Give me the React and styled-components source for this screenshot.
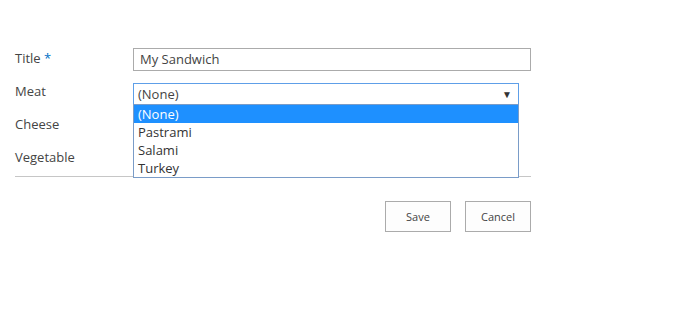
import styled, { createGlobalStyle } from "styled-components";

const GlobalStyle = createGlobalStyle`
  body {
    margin: 0;
    background: #ffffff;
    font-family: "Open Sans", "Noto Sans", sans-serif;
    color: #444444;
  }
`;

const options = ["(None)", "Pastrami", "Salami", "Turkey"];

export default function App() {
  return (
    <Page>
      <GlobalStyle />
      <Form>
        <Label>
          Title <Required>*</Required>
        </Label>
        <TextInput>My Sandwich</TextInput>

        <Label>Meat</Label>
        <SelectWrap>
          <Select>
            <span>(None)</span>
            <Arrow>▼</Arrow>
          </Select>
          <Menu>
            {options.map((o, i) => (
              <Option key={o} selected={i === 0}>
                {o}
              </Option>
            ))}
          </Menu>
        </SelectWrap>

        <Label>Cheese</Label>
        <div />

        <Label>Vegetable</Label>
        <div />
      </Form>
      <Divider />
      <Actions>
        <Button>Save</Button>
        <Button>Cancel</Button>
      </Actions>
    </Page>
  );
}

const Page = styled.div`
  width: 516px;
  padding: 48px 0 0 15px;
`;

const Form = styled.div`
  display: grid;
  grid-template-columns: 118px 1fr;
  grid-auto-rows: 22px;
  row-gap: 11px;
`;

const Label = styled.div`
  font-size: 13px;
  line-height: 21px;
  color: #444444;
`;

const Required = styled.span`
  color: #0072c6;
`;

const TextInput = styled.div`
  box-sizing: border-box;
  height: 23px;
  border: 1px solid #ababab;
  padding: 0 6px;
  font-size: 13px;
  line-height: 21px;
  color: #444444;
`;

const SelectWrap = styled.div`
  position: relative;
  width: 386px;
  margin-top: 2px;
`;

const Select = styled.div`
  box-sizing: border-box;
  height: 22px;
  border: 1px solid #5e9fe8;
  padding: 0 6px 0 4px;
  display: flex;
  align-items: center;
  justify-content: space-between;
  font-size: 13px;
  color: #444444;
`;

const Arrow = styled.span`
  font-size: 10px;
  color: #333333;
`;

const Menu = styled.div`
  position: absolute;
  top: 21px;
  left: 0;
  right: 0;
  box-sizing: border-box;
  background: #ffffff;
  border: 1px solid #7a9cc8;
  z-index: 2;
`;

const Option = styled.div`
  height: 18px;
  line-height: 18px;
  padding: 0 4px;
  font-size: 13px;
  background: ${(p) => (p.selected ? "#1e90ff" : "transparent")};
  color: ${(p) => (p.selected ? "#ffffff" : "#333333")};
`;

const Divider = styled.div`
  height: 1px;
  background: #c6c6c6;
  margin-top: 7px;
`;

const Actions = styled.div`
  display: flex;
  justify-content: flex-end;
  gap: 14px;
  margin-top: 24px;
`;

const Button = styled.div`
  box-sizing: border-box;
  width: 66px;
  height: 31px;
  border: 1px solid #ababab;
  background: #fdfdfd;
  display: flex;
  align-items: center;
  justify-content: center;
  font-size: 11px;
  color: #444444;
`;
